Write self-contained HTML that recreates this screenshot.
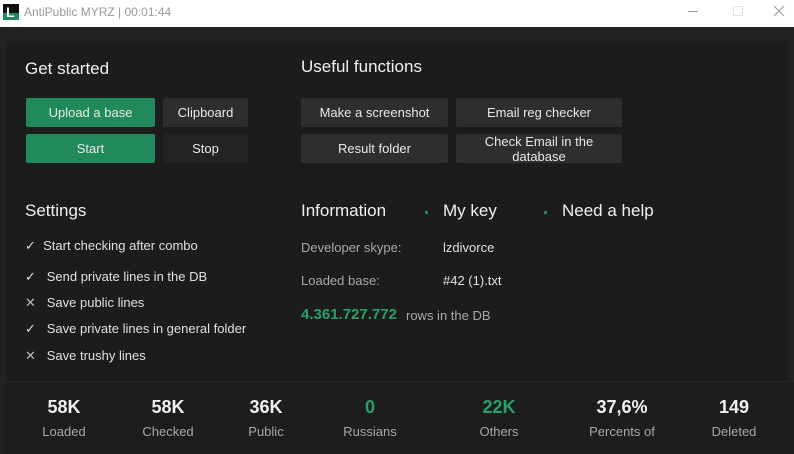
<!DOCTYPE html>
<html><head><meta charset="utf-8"><style>
*{margin:0;padding:0;box-sizing:border-box}
body{width:794px;height:454px;overflow:hidden;background:#222;font-family:"Liberation Sans","DejaVu Sans",sans-serif;position:relative;color:#e6e6e6}
.a{position:absolute;white-space:nowrap}
.tb{left:0;top:0;width:794px;height:27px;background:#fff}
.panel{left:6px;top:41px;width:782px;height:340px;background:#1c1c1c}
.bot{left:4px;top:381px;width:790px;height:73px;background:#1d1d1d;border-top:1px solid #262626}
.btn{position:absolute;display:flex;align-items:center;justify-content:center;font-size:13px;color:#e8e8e8;text-align:center;line-height:15px;border-radius:2px}
.g{background:#218a5c}
.d{background:#2e2e2e}
h2{position:absolute;font-size:17px;font-weight:normal;color:#f0f0f0;white-space:nowrap}
.it{position:absolute;font-size:13px;color:#e0e0e0;white-space:nowrap}
.lb{position:absolute;font-size:13px;color:#a8a8a8;white-space:nowrap}
.st{position:absolute;width:120px;text-align:center;transform:translateX(-60px)}
.st b{display:block;font-size:18px;color:#f0f0f0;font-weight:bold;height:24px}
.st span{display:block;font-size:13px;color:#a8a8a8;margin-top:3px}
</style></head><body>
<div class="a tb"></div>
<div class="a" style="left:3px;top:4px;width:16px;height:16px;background:#111"></div>
<div class="a" style="left:3px;top:13px;width:16px;height:7px;background:#218a5c"></div>
<div class="a" style="left:6px;top:4px;font-size:14px;font-weight:bold;color:#fff;line-height:16px">L</div>
<div class="a" style="left:24px;top:5px;font-size:12px;color:#999">AntiPublic MYRZ | 00:01:44</div>
<div class="a" style="left:688px;top:11px;width:10px;height:1px;background:#999"></div>
<div class="a" style="left:733px;top:6px;width:10px;height:10px;border:1px solid #e4e4e4"></div>
<svg class="a" style="left:773px;top:5px" width="12" height="12"><path d="M1 1L11 11M11 1L1 11" stroke="#999" stroke-width="1"/></svg>

<div class="a panel"></div>
<h2 style="left:25px;top:59px">Get started</h2>
<h2 style="left:301px;top:57px">Useful functions</h2>
<div class="btn g" style="left:26px;top:98px;width:129px;height:29px">Upload a base</div>
<div class="btn d" style="left:163px;top:98px;width:85px;height:29px">Clipboard</div>
<div class="btn g" style="left:26px;top:134px;width:129px;height:29px">Start</div>
<div class="btn" style="left:163px;top:134px;width:85px;height:29px;background:#232323">Stop</div>
<div class="btn d" style="left:301px;top:98px;width:147px;height:29px">Make a screenshot</div>
<div class="btn d" style="left:456px;top:98px;width:166px;height:29px">Email reg checker</div>
<div class="btn d" style="left:301px;top:134px;width:147px;height:29px">Result folder</div>
<div class="btn d" style="left:456px;top:134px;width:166px;height:29px;padding:0 22px;white-space:normal">Check Email in the database</div>

<h2 style="left:25px;top:201px">Settings</h2>
<div class="it" style="left:25px;top:238px">✓ &nbsp;Start checking after combo</div>
<div class="it" style="left:25px;top:269px">✓ &nbsp;&nbsp;Send private lines in the DB</div>
<div class="it" style="left:25px;top:295px;color:#e0e0e0"><span style="color:#bbb">✕</span> &nbsp;&nbsp;Save public lines</div>
<div class="it" style="left:25px;top:321px">✓ &nbsp;&nbsp;Save private lines in general folder</div>
<div class="it" style="left:25px;top:348px"><span style="color:#bbb">✕</span> &nbsp;&nbsp;Save trushy lines</div>

<h2 style="left:301px;top:201px">Information</h2>
<div class="a" style="left:425px;top:211px;width:3px;height:3px;background:#218a5c"></div>
<h2 style="left:443px;top:201px">My key</h2>
<div class="a" style="left:544px;top:211px;width:3px;height:3px;background:#218a5c"></div>
<h2 style="left:562px;top:201px">Need a help</h2>
<div class="lb" style="left:301px;top:240px">Developer skype:</div>
<div class="it" style="left:443px;top:240px">lzdivorce</div>
<div class="lb" style="left:301px;top:273px">Loaded base:</div>
<div class="it" style="left:443px;top:273px">#42 (1).txt</div>
<div class="a" style="left:301px;top:306px;font-size:15px;font-weight:bold;color:#27a06a">4.361.727.772</div>
<div class="lb" style="left:406px;top:308px">rows in the DB</div>

<div class="a bot"></div>
<div class="st" style="left:64px;top:397px"><b>58K</b><span>Loaded</span></div>
<div class="st" style="left:168px;top:397px"><b>58K</b><span>Checked</span></div>
<div class="st" style="left:266px;top:397px"><b>36K</b><span>Public</span></div>
<div class="st" style="left:370px;top:397px"><b style="color:#27a06a">0</b><span>Russians</span></div>
<div class="st" style="left:499px;top:397px"><b style="color:#27a06a">22K</b><span>Others</span></div>
<div class="st" style="left:622px;top:397px"><b>37,6%</b><span>Percents of</span></div>
<div class="st" style="left:734px;top:397px"><b>149</b><span>Deleted</span></div>
</body></html>
